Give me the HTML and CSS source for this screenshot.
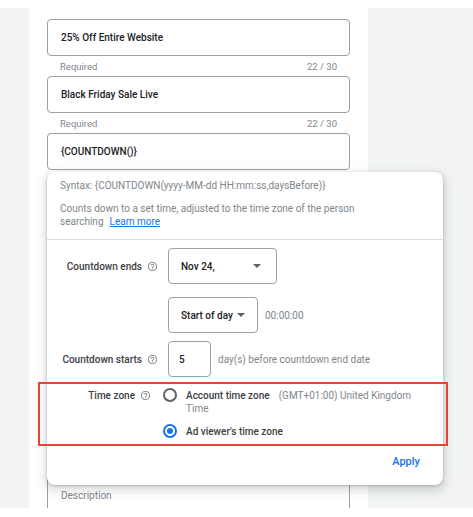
FILE: index.html
```html
<!DOCTYPE html>
<html>
<head>
<meta charset="utf-8">
<link rel="stylesheet" href="styles.css">
</head>
<body>
<div class="stage">
  <div class="panel">
    <div class="field">25% Off Entire Website</div>
    <div class="helper"><span>Required</span><span>22 / 30</span></div>
    <div class="field">Black Friday Sale Live</div>
    <div class="helper"><span>Required</span><span>22 / 30</span></div>
    <div class="field">{COUNTDOWN()}</div>
    <div class="field desc">Description</div>

    <div class="card">
      <div class="card-head">
        <p class="syntax">Syntax: {COUNTDOWN(yyyy-MM-dd HH:mm:ss,daysBefore)}</p>
        <p class="info">Counts down to a set time, adjusted to the time zone of the person</p>
        <p class="info2"><span>searching</span><a class="link">Learn more</a></p>
      </div>
      <div class="card-body">
        <div class="row">
          <div class="label">Countdown ends <svg class="help" viewBox="0 0 24 24"><path d="M11 18h2v-2h-2v2zm1-16C6.48 2 2 6.48 2 12s4.48 10 10 10 10-4.48 10-10S17.52 2 12 2zm0 18c-4.41 0-8-3.59-8-8s3.59-8 8-8 8 3.59 8 8-3.59 8-8 8zm0-14c-2.21 0-4 1.79-4 4h2c0-1.1.9-2 2-2s2 .9 2 2c0 2-3 1.75-3 5h2c0-2.25 3-2.5 3-5 0-2.21-1.79-4-4-4z"/></svg></div>
          <div class="ctrl">
            <div class="select w-date"><span>Nov 24,</span><span class="caret"></span></div>
          </div>
        </div>
        <div class="row r2">
          <div class="label"></div>
          <div class="ctrl">
            <div class="select w-day"><span>Start of day</span><span class="caret"></span></div>
            <span class="muted">00:00:00</span>
          </div>
        </div>
        <div class="row r3">
          <div class="label">Countdown starts <svg class="help" viewBox="0 0 24 24"><path d="M11 18h2v-2h-2v2zm1-16C6.48 2 2 6.48 2 12s4.48 10 10 10 10-4.48 10-10S17.52 2 12 2zm0 18c-4.41 0-8-3.59-8-8s3.59-8 8-8 8 3.59 8 8-3.59 8-8 8zm0-14c-2.21 0-4 1.79-4 4h2c0-1.1.9-2 2-2s2 .9 2 2c0 2-3 1.75-3 5h2c0-2.25 3-2.5 3-5 0-2.21-1.79-4-4-4z"/></svg></div>
          <div class="ctrl">
            <div class="select w-num"><span>5</span></div>
            <span class="muted">day(s) before countdown end date</span>
          </div>
        </div>
        <div class="row tz">
          <div class="label tz-label">Time zone <svg class="help" viewBox="0 0 24 24"><path d="M11 18h2v-2h-2v2zm1-16C6.48 2 2 6.48 2 12s4.48 10 10 10 10-4.48 10-10S17.52 2 12 2zm0 18c-4.41 0-8-3.59-8-8s3.59-8 8-8 8 3.59 8 8-3.59 8-8 8zm0-14c-2.21 0-4 1.79-4 4h2c0-1.1.9-2 2-2s2 .9 2 2c0 2-3 1.75-3 5h2c0-2.25 3-2.5 3-5 0-2.21-1.79-4-4-4z"/></svg></div>
          <div class="radios">
            <div class="opt">
              <span class="radio"></span>
              <div class="opt-text">
                <div class="line"><span class="strong">Account time zone</span><span class="muted">(GMT+01:00) United Kingdom</span></div>
                <div class="line"><span class="muted">Time</span></div>
              </div>
            </div>
            <div class="opt second">
              <span class="radio on"></span>
              <div class="opt-text"><span class="strong">Ad viewer's time zone</span></div>
            </div>
          </div>
        </div>
        <div class="actions"><a class="apply">Apply</a></div>
      </div>
      <div class="highlight"></div>
    </div>
  </div>
</div>
</body>
</html>
```

FILE: styles.css
```css
html, body {
  margin: 0;
  background: #ffffff;
}
body {
  font-family: Roboto, "Noto Sans", Arial, sans-serif;
  color: #3c4043;
  height: 517px;
}
.stage {
  margin-top: 8px;
  height: 500px;
  background: #f1f3f4;
  padding-left: 29px;
  overflow: hidden;
}
.panel {
  position: relative;
  width: 339px;
  height: 100%;
  box-sizing: border-box;
  background: #ffffff;
  padding: 11px 18px 0;
}
.field {
  height: 37px;
  box-sizing: border-box;
  border: 1px solid #9aa0a6;
  border-radius: 4px;
  display: flex;
  align-items: center;
  padding: 0 13px;
  font-size: 10px;
  font-weight: 500;
  color: #202124;
}
.helper {
  height: 20px;
  display: flex;
  justify-content: space-between;
  align-items: center;
  padding: 0 13px;
  font-size: 9.5px;
  color: #80868b;
}
.field.desc {
  margin-top: 307px;
  font-weight: 400;
  font-size: 10px;
  color: #80868b;
}
.card {
  position: absolute;
  left: 18px;
  top: 164px;
  width: 396px;
  height: 313px;
  background: #ffffff;
  border-radius: 8px;
  box-shadow: 0 1px 3px rgba(60, 64, 67, 0.3), 0 4px 8px 3px rgba(60, 64, 67, 0.15);
}
.card-head {
  padding: 7px 13px 11px;
  border-bottom: 1px solid #dadce0;
  font-size: 10px;
  line-height: 13px;
  color: #80868b;
}
.card-head p {
  margin: 0;
}
.card-head .info {
  margin-top: 10px;
}
.card-head .info2 {
  display: flex;
  gap: 6px;
}
.link {
  color: #1a73e8;
  text-decoration: underline;
}
.card-body {
  padding: 8px 23px 0 13px;
}
.row {
  display: grid;
  grid-template-columns: 98px auto;
  column-gap: 10px;
  align-items: center;
}
.r2 {
  margin-top: 13px;
}
.r3 {
  margin-top: 8px;
}
.label {
  display: flex;
  justify-content: flex-end;
  align-items: center;
  gap: 5px;
  font-size: 10px;
  font-weight: 500;
  color: #3c4043;
  white-space: nowrap;
}
.help {
  width: 11px;
  height: 11px;
  fill: #80868b;
  flex: none;
}
.ctrl {
  display: flex;
  align-items: center;
  gap: 7px;
}
.select {
  height: 36px;
  box-sizing: border-box;
  border: 1px solid #9aa0a6;
  border-radius: 4px;
  display: flex;
  align-items: center;
  justify-content: space-between;
  padding: 0 12px;
  font-size: 10px;
  font-weight: 500;
  color: #202124;
  white-space: nowrap;
}
.w-date {
  width: 109px;
  padding-right: 15px;
}
.w-day {
  width: 90px;
  padding-right: 12px;
}
.w-num {
  width: 43px;
  padding-left: 10px;
}
.caret {
  width: 0;
  height: 0;
  border-left: 4px solid transparent;
  border-right: 4px solid transparent;
  border-top: 4px solid #5f6368;
}
.muted {
  font-size: 10px;
  font-weight: 400;
  color: #80868b;
}
.tz {
  margin-top: 12px;
  align-items: start;
}
.tz-label {
  padding-right: 7px;
  line-height: 13px;
}
.radios {
  margin-left: -5px;
  display: flex;
  flex-direction: column;
  gap: 10px;
}
.opt {
  display: flex;
  align-items: flex-start;
  gap: 9px;
}
.radio {
  flex: none;
  width: 14px;
  height: 14px;
  box-sizing: border-box;
  border: 2px solid #5f6368;
  border-radius: 50%;
  margin-top: -1px;
  display: flex;
  align-items: center;
  justify-content: center;
}
.radio.on {
  border-color: #1a73e8;
}
.radio.on::after {
  content: "";
  width: 6px;
  height: 6px;
  border-radius: 50%;
  background: #1a73e8;
}
.opt-text {
  font-size: 10px;
  line-height: 13px;
  width: 234px;
}
.line {
  display: flex;
  gap: 9px;
}
.strong {
  font-weight: 500;
  color: #3c4043;
}
.actions {
  margin-top: 18px;
  display: flex;
  justify-content: flex-end;
  line-height: 12px;
}
.apply {
  font-size: 11px;
  font-weight: 500;
  color: #1a73e8;
}
.highlight {
  position: absolute;
  left: -9px;
  top: 210px;
  width: 410px;
  height: 64px;
  box-sizing: border-box;
  border: 2px solid #ea4335;
}
```
